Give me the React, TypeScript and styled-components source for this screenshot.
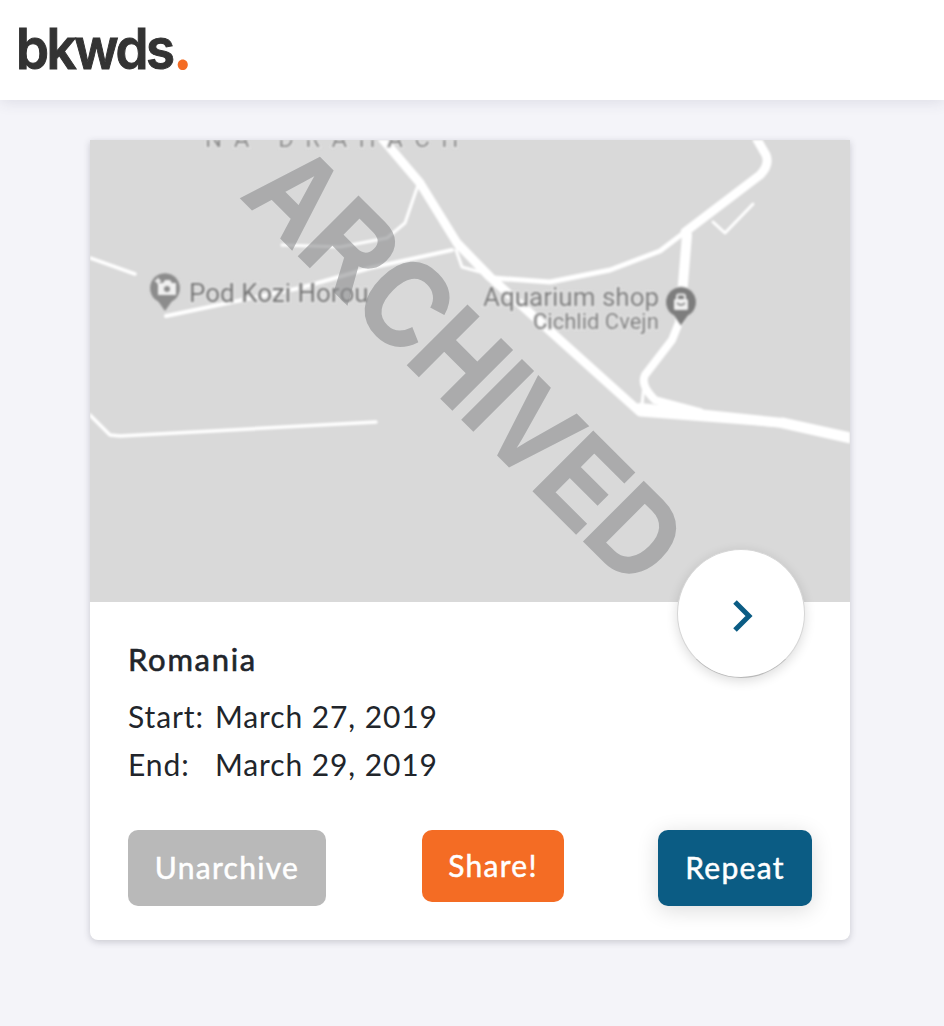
import React from 'react';
import styled, { createGlobalStyle } from 'styled-components';

const GlobalStyle = createGlobalStyle`
  html, body {
    margin: 0;
    background-color: #f4f4f9;
    font-family: 'Lato', 'Liberation Sans', sans-serif;
    color: #21252b;
  }
`;

const Page = styled.div`
  min-height: 1026px;
  display: flex;
  flex-direction: column;
`;

const Header = styled.header`
  height: 100px;
  padding-left: 16px;
  display: flex;
  align-items: center;
  background-color: #fff;
  box-shadow: 0 2px 14px rgba(60, 60, 90, 0.12);
`;

const Logo = styled.div`
  font-family: 'Inter', sans-serif;
  font-size: 56px;
  font-weight: 600;
  letter-spacing: -2.6px;
  line-height: 1;
  color: #333;
  -webkit-text-stroke: 1px #333;
  margin-top: -3px;
  transform-origin: 0 50%;
  transform: scaleX(0.945);
`;

const LogoDot = styled.span`
  color: #f46c24;
  -webkit-text-stroke: 0;
  font-size: 68px;
  line-height: 0;
  margin-left: 0;
`;

const Main = styled.main`
  padding: 40px 94px 0 90px;
`;

const Card = styled.section`
  position: relative;
  background-color: #fff;
  border-radius: 0 0 8px 8px;
  box-shadow: 0 2px 7px rgba(50, 50, 70, 0.22);
`;

const MapArea = styled.div`
  position: relative;
  height: 462px;
  overflow: hidden;
  background-color: #d9d9d9;
`;

const MapSvg = styled.svg`
  display: block;
  width: 760px;
  height: 462px;
  filter: blur(0.8px);
`;

const MapLabel = styled.text<{ $size: number; $fill: string }>`
  font-family: 'Roboto', sans-serif;
  font-size: ${(props) => props.$size}px;
  fill: ${(props) => props.$fill};
  stroke: #e6e6e6;
  stroke-width: 2.5px;
  paint-order: stroke;
`;

const Stamp = styled.div`
  position: absolute;
  left: 136px;
  top: 48px;
  font-family: 'Liberation Sans', sans-serif;
  font-size: 122px;
  font-weight: 700;
  line-height: 1;
  white-space: nowrap;
  color: #8a8b8d;
  opacity: 0.58;
  -webkit-text-stroke: 2px #8a8b8d;
  transform-origin: 0 100%;
  transform: translate(0, -100px) rotate(45deg) scaleX(0.875);
`;

const NextButton = styled.button`
  position: absolute;
  left: 587px;
  top: 409px;
  width: 128px;
  height: 129px;
  padding: 0;
  display: flex;
  align-items: center;
  justify-content: center;
  background-color: #fff;
  border: 1.5px solid #d6d6d6;
  border-bottom-color: #b8b8b8;
  border-radius: 50%;
  box-shadow: 0 3px 12px rgba(0, 0, 0, 0.14);
`;

const Chevron = styled.svg`
  width: 22px;
  height: 34px;
  margin: 4px 0 0 4px;
`;

const Body = styled.div`
  padding: 37px 38px 34px;
`;

const Title = styled.h2`
  margin: 0 0 13px;
  font-size: 31px;
  font-weight: 400;
  line-height: 40px;
  letter-spacing: 1.7px;
  -webkit-text-stroke: 0.6px #21252b;
`;

const DateRow = styled.div`
  display: grid;
  grid-template-columns: 87px 1fr;
  font-size: 30px;
  line-height: 48px;
  letter-spacing: 0.9px;
`;

const Actions = styled.div`
  margin-top: 42px;
  display: flex;
  justify-content: space-between;
  align-items: flex-start;
`;

const Action = styled.button<{ $bg: string; $height: number; $width: number; $lift?: boolean; $nudge?: number }>`
  width: ${(props) => props.$width}px;
  height: ${(props) => props.$height}px;
  margin-left: ${(props) => props.$nudge || 0}px;
  padding: 0 0 3px;
  border: 0;
  border-radius: 10px;
  background-color: ${(props) => props.$bg};
  color: #fff;
  font-family: 'Lato', sans-serif;
  font-size: 30px;
  font-weight: 400;
  letter-spacing: 1.3px;
  -webkit-text-stroke: 0.5px #fff;
  box-shadow: ${(props) => (props.$lift ? '0 4px 22px rgba(0, 0, 0, 0.14)' : 'none')};
`;

const roads = [
  { d: 'M380 136 L420 183 L457 243 L490 277 L630 403 L640 412 L783 423 L850 438', w: 9 },
  { d: 'M783 423 L850 438', w: 11 },
  { d: 'M640 408 L783 423', w: 10 },
  { d: 'M493 278 L550 282 L610 270 L660 251 L685 232', w: 5 },
  { d: 'M685 232 L760 175 Q770 165 766 155 L755 136', w: 9 },
  { d: 'M687 235 L680 320', w: 10 },
  { d: 'M680 320 L672 340 L645 375 Q640 385 655 400 L700 412', w: 8 },
  { d: 'M713 222 L725 233 L753 204', w: 3 },
  { d: 'M644 385 L642 405', w: 3 },
  { d: 'M90 258 L135 274', w: 3.5 },
  { d: 'M166 316 L300 288 L370 268 L452 250', w: 4 },
  { d: 'M282 245 L340 247 L387 238 L405 223 L418 185', w: 3 },
  { d: 'M456 250 L462 267 L480 272', w: 3 },
  { d: 'M88 413 L110 435 L120 436 L376 422', w: 3.5 },
];

const MapDrawing = () => (
  <MapSvg viewBox="90 140 760 462">
    <g fill="none" stroke="#fff" strokeLinejoin="round" strokeLinecap="round">
      {roads.map((road) => (
        <path key={road.d} d={road.d} strokeWidth={road.w} />
      ))}
    </g>
    <MapLabel x="205" y="147" $size={24} $fill="#8a8a8a" letterSpacing="11.4">
      NA DRAHACH
    </MapLabel>
    <MapLabel x="189" y="302" $size={26} $fill="#757575">
      Pod Kozi Horou
    </MapLabel>
    <MapLabel x="483" y="306" $size={26} $fill="#7d7d7d">
      Aquarium shop
    </MapLabel>
    <MapLabel x="533" y="329" $size={22} $fill="#7d7d7d">
      Cichlid Cvejn
    </MapLabel>
    <path
      d="M165 312 L158 302 A15.5 15.5 0 1 1 172 302 Z"
      fill="#8c8c8c"
      stroke="#e4e4e4"
      strokeWidth="1"
    />
    <path d="M158 283 H163 L165 280 H170 L172 283 H176 V295 H158 Z" fill="#f0f0f0" />
    <circle cx="167" cy="289" r="3" fill="#8c8c8c" />
    <path d="M155 281 H161 M158 278 V284" stroke="#f0f0f0" strokeWidth="2" />
    <path
      d="M681 326 L674 316 A15.5 15.5 0 1 1 688 316 Z"
      fill="#7d7d7d"
      stroke="#e4e4e4"
      strokeWidth="1"
    />
    <rect x="674" y="299" width="14" height="11" rx="1.5" fill="#f0f0f0" />
    <path d="M677 299 V296.5 A2 2 0 0 1 679 294.5 H683 A2 2 0 0 1 685 296.5 V299" fill="none" stroke="#f0f0f0" strokeWidth="2" />
    <path d="M677 303 Q681 307 685 303" fill="none" stroke="#7d7d7d" strokeWidth="1.3" />
  </MapSvg>
);

const App = () => {
  return (
    <Page>
      <GlobalStyle />
      <Header>
        <Logo>
          bkwds<LogoDot>.</LogoDot>
        </Logo>
      </Header>
      <Main>
        <Card>
          <MapArea>
            <MapDrawing />
            <Stamp>ARCHIVED</Stamp>
          </MapArea>
          <NextButton aria-label="Next">
            <Chevron viewBox="0 0 22 34">
              <polyline points="3,3 17,17 3,31" fill="none" stroke="#0b5c84" strokeWidth="5" />
            </Chevron>
          </NextButton>
          <Body>
            <Title>Romania</Title>
            <DateRow>
              <span>Start:</span>
              <span>March 27, 2019</span>
            </DateRow>
            <DateRow>
              <span>End:</span>
              <span>March 29, 2019</span>
            </DateRow>
            <Actions>
              <Action $bg="#b9b9b9" $width={198} $height={76}>
                Unarchive
              </Action>
              <Action $bg="#f46c24" $width={142} $height={72} $nudge={2}>
                Share!
              </Action>
              <Action $bg="#0b5c84" $width={154} $height={76} $lift>
                Repeat
              </Action>
            </Actions>
          </Body>
        </Card>
      </Main>
    </Page>
  );
};

export default App;
